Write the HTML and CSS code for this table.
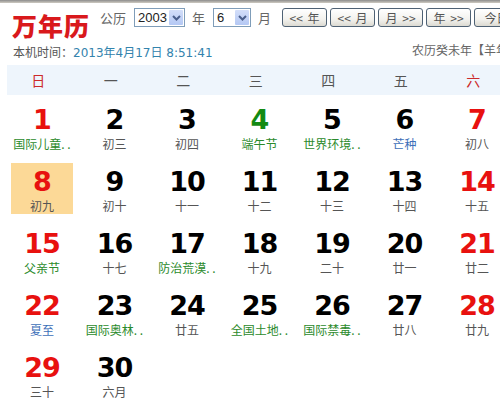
FILE: index.html
```html
<!DOCTYPE html>
<html lang="zh-CN">
<head>
<meta charset="utf-8">
<title>万年历</title>
<link rel="stylesheet" href="styles.css">
</head>
<body>
<div class="topbar"></div>
<div class="toolbar">
  <h1 class="logo">万年历</h1>
  <span class="lbl first">公历</span>
  <div class="select year"><span class="val">2003</span><i class="arrow"><svg width="9" height="6" viewBox="0 0 9 6"><path d="M1 1 L4.5 4.5 L8 1" fill="none" stroke="#4a5f8c" stroke-width="2"/></svg></i></div>
  <span class="lbl">年</span>
  <div class="select month"><span class="val">6</span><i class="arrow"><svg width="9" height="6" viewBox="0 0 9 6"><path d="M1 1 L4.5 4.5 L8 1" fill="none" stroke="#4a5f8c" stroke-width="2"/></svg></i></div>
  <span class="lbl">月</span>
  <div class="btns">
    <button class="btn">&lt;&lt; 年</button>
    <button class="btn">&lt;&lt; 月</button>
    <button class="btn">月 &gt;&gt;</button>
    <button class="btn">年 &gt;&gt;</button>
    <button class="btn">今日</button>
  </div>
</div>
<div class="info">
  <span class="now">本机时间：<em>2013年4月17日 8:51:41</em></span>
  <span class="lunar-year">农历癸未年【羊年】</span>
</div>
<div class="week">
  <span class="wk red">日</span><span class="wk">一</span><span class="wk">二</span><span class="wk">三</span><span class="wk">四</span><span class="wk">五</span><span class="wk red">六</span>
</div>
<div class="days">
  <div class="cell"><span class="d red">1</span><span class="l fest">国际儿童. .</span></div>
  <div class="cell"><span class="d">2</span><span class="l">初三</span></div>
  <div class="cell"><span class="d">3</span><span class="l">初四</span></div>
  <div class="cell"><span class="d green">4</span><span class="l fest">端午节</span></div>
  <div class="cell"><span class="d">5</span><span class="l fest">世界环境. .</span></div>
  <div class="cell"><span class="d">6</span><span class="l term">芒种</span></div>
  <div class="cell"><span class="d red">7</span><span class="l">初八</span></div>

  <div class="cell sel"><span class="d red">8</span><span class="l">初九</span></div>
  <div class="cell"><span class="d">9</span><span class="l">初十</span></div>
  <div class="cell"><span class="d">10</span><span class="l">十一</span></div>
  <div class="cell"><span class="d">11</span><span class="l">十二</span></div>
  <div class="cell"><span class="d">12</span><span class="l">十三</span></div>
  <div class="cell"><span class="d">13</span><span class="l">十四</span></div>
  <div class="cell"><span class="d red">14</span><span class="l">十五</span></div>

  <div class="cell"><span class="d red">15</span><span class="l fest">父亲节</span></div>
  <div class="cell"><span class="d">16</span><span class="l">十七</span></div>
  <div class="cell"><span class="d">17</span><span class="l fest">防治荒漠. .</span></div>
  <div class="cell"><span class="d">18</span><span class="l">十九</span></div>
  <div class="cell"><span class="d">19</span><span class="l">二十</span></div>
  <div class="cell"><span class="d">20</span><span class="l">廿一</span></div>
  <div class="cell"><span class="d red">21</span><span class="l">廿二</span></div>

  <div class="cell"><span class="d red">22</span><span class="l term">夏至</span></div>
  <div class="cell"><span class="d">23</span><span class="l fest">国际奥林. .</span></div>
  <div class="cell"><span class="d">24</span><span class="l">廿五</span></div>
  <div class="cell"><span class="d">25</span><span class="l fest">全国土地. .</span></div>
  <div class="cell"><span class="d">26</span><span class="l fest">国际禁毒. .</span></div>
  <div class="cell"><span class="d">27</span><span class="l">廿八</span></div>
  <div class="cell"><span class="d red">28</span><span class="l">廿九</span></div>

  <div class="cell"><span class="d red">29</span><span class="l">三十</span></div>
  <div class="cell"><span class="d">30</span><span class="l">六月</span></div>
  <div class="cell empty"></div>
  <div class="cell empty"></div>
  <div class="cell empty"></div>
  <div class="cell empty"></div>
  <div class="cell empty"></div>
</div>
</body>
</html>
```
FILE: styles.css
```css
html, body {
  margin: 0;
  padding: 0;
  overflow: hidden;
  background: #fff;
}
body {
  width: 520px;
  font-family: "DejaVu Sans", "Noto Sans CJK SC", sans-serif;
  font-size: 12px;
  color: #555;
}
.topbar {
  height: 3px;
  background: linear-gradient(#8c8c8c, #cfcbc2);
}
.toolbar {
  display: flex;
  align-items: flex-start;
  padding: 5px 0 0 12px;
  height: 34px;
  box-sizing: border-box;
}
.logo {
  margin: 5px 0 0 0;
  font-family: "Noto Sans CJK SC", sans-serif;
  font-weight: 900;
  font-size: 25px;
  line-height: 25px;
  letter-spacing: 1px;
  color: #d9191c;
}
.lbl {
  font-family: "Noto Sans CJK SC", sans-serif;
  font-size: 13px;
  line-height: 19px;
  color: #666;
  margin: 0 8px 0 7px;
}
.lbl.first {
  margin-left: 10px;
}
.select {
  display: flex;
  align-items: stretch;
  height: 19px;
  box-sizing: border-box;
  border: 1px solid #7f9db9;
  background: #fff;
  padding: 1px;
}
.select.year { width: 51px; }
.select.month { width: 38px; }
.select .val {
  flex: 1;
  font-family: "Liberation Sans", sans-serif;
  font-size: 13px;
  line-height: 15px;
  color: #222;
  padding-left: 2px;
}
.select .arrow {
  width: 14px;
  display: flex;
  align-items: center;
  justify-content: center;
  background: linear-gradient(#d3def9, #b4c8f4);
  border-radius: 1px;
}
.btns {
  display: flex;
  gap: 3px;
  margin-left: 3px;
}
.btn {
  width: 45px;
  height: 19px;
  box-sizing: border-box;
  padding: 0;
  border: 1px solid #4e6174;
  border-radius: 3px;
  background: linear-gradient(#ffffff, #f3f2ee 60%, #dcdad2);
  font-family: "Noto Sans CJK SC", sans-serif;
  font-size: 12px;
  line-height: 17px;
  color: #555;
  word-spacing: 2px;
  white-space: nowrap;
}
.info {
  display: flex;
  align-items: flex-start;
  padding: 0 0 0 13px;
  margin-top: 5px;
  height: 23px;
}
.now {
  width: 405px;
  font-family: "Noto Sans CJK SC", sans-serif;
  font-size: 12px;
  line-height: 14px;
  color: #555;
  padding-top: 3px;
}
.now em {
  font-style: normal;
  font-family: "DejaVu Sans", "Noto Sans CJK SC", sans-serif;
  color: #3383ad;
}
.lunar-year {
  font-family: "Noto Sans CJK SC", sans-serif;
  font-size: 12px;
  line-height: 14px;
  color: #666;
  white-space: nowrap;
  padding-top: 1px;
}
.week {
  display: grid;
  grid-template-columns: repeat(7, 72.5px);
  margin: 0 0 0 7px;
  height: 30px;
  background: #eef5fc;
}
.wk {
  text-align: center;
  padding-right: 10px;
  font-family: "Noto Sans CJK SC", sans-serif;
  font-size: 14px;
  line-height: 30px;
  color: #555;
}
.wk.red { color: #cc2a2a; }
.days {
  display: grid;
  grid-template-columns: repeat(7, 62px);
  grid-auto-rows: 51px;
  column-gap: 10.5px;
  row-gap: 11px;
  margin: 6px 0 0 11px;
}
.cell {
  display: flex;
  flex-direction: column;
  align-items: center;
  white-space: nowrap;
}
.cell.sel {
  background: #fcd997;
}
.d {
  font-family: "DejaVu Sans", sans-serif;
  font-weight: bold;
  font-size: 27px;
  line-height: 30px;
  letter-spacing: -1px;
  padding-top: 4px;
  color: #000;
}
.d.red { color: #e8110f; }
.d.green { color: #138a13; }
.l {
  margin-top: 2px;
  font-family: "Noto Sans CJK SC", sans-serif;
  font-size: 12px;
  line-height: 14px;
  color: #555;
}
.l.fest { color: #2b8a2b; }
.l.term { color: #3d6fb8; }
```
